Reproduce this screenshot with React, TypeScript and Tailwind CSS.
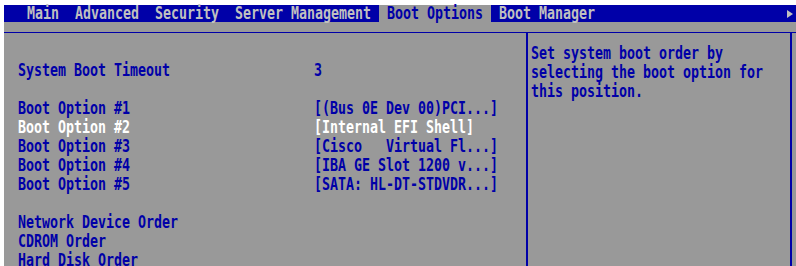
const rows: ({ label: string; value?: string; active?: boolean } | null)[] = [
  { label: 'System Boot Timeout', value: '3' },
  null,
  { label: 'Boot Option #1', value: '[(Bus 0E Dev 00)PCI...]' },
  { label: 'Boot Option #2', value: '[Internal EFI Shell]', active: true },
  { label: 'Boot Option #3', value: '[Cisco   Virtual Fl...]' },
  { label: 'Boot Option #4', value: '[IBA GE Slot 1200 v...]' },
  { label: 'Boot Option #5', value: '[SATA: HL-DT-STDVDR...]' },
  null,
  { label: 'Network Device Order' },
  { label: 'CDROM Order' },
  { label: 'Hard Disk Order' },
]

// bitmap-ish BIOS text: tall mono glyphs squeezed to an 8px cell
function T({ children, className = '' }: { children: React.ReactNode; className?: string }) {
  return (
    <span className={`inline-block origin-left scale-x-[0.782] whitespace-pre ${className}`}>
      {children}
    </span>
  )
}

export default function App() {
  return (
    <div className="flex h-[266px] w-[796px] flex-col overflow-hidden bg-white pl-[4px] pt-[5px] font-['DejaVu_Sans_Mono','Liberation_Mono',monospace] text-[17px] font-bold leading-[19px]">
      {/* tab bar */}
      <div className="flex h-[17px] shrink-0 items-stretch bg-[#0000a8] pl-[15px] leading-[17px] text-[#c0c0c0]">
        <div className="w-[48px] shrink-0 pl-[8px]"><T>Main</T></div>
        <div className="w-[80px] shrink-0 pl-[8px]"><T>Advanced</T></div>
        <div className="w-[80px] shrink-0 pl-[8px]"><T>Security</T></div>
        <div className="w-[152px] shrink-0 pl-[8px]"><T>Server Management</T></div>
        <div className="w-[112px] shrink-0 bg-[#999999] pl-[8px] text-[#0000a8]"><T>Boot Options</T></div>
        <div className="w-[112px] shrink-0 pl-[8px]"><T>Boot Manager</T></div>
        <div className="ml-auto mr-[3px] flex items-center">
          <div className="h-0 w-0 border-y-[4px] border-l-[6px] border-y-transparent border-l-[#c0c0c0]" />
        </div>
      </div>

      <div className="flex flex-1 flex-col bg-[#999999] pt-[10px]">
        <div className="flex flex-1 border-t border-[#0000a8]">
          {/* settings list */}
          <div className="w-[522px] shrink-0 pl-[14px] pt-[28px]">
            {rows.map((r, i) =>
              r ? (
                <div
                  key={i}
                  className={`flex h-[19px] ${r.active ? 'text-white' : 'text-[#0000a8]'}`}
                >
                  <div className="w-[296px] shrink-0"><T>{r.label}</T></div>
                  {r.value && <div className="shrink-0"><T>{r.value}</T></div>}
                </div>
              ) : (
                <div key={i} className="h-[19px]" />
              )
            )}
          </div>

          {/* help panel */}
          <div className="w-[266px] shrink-0 border-x-2 border-[#0000a8] pl-[3px] pt-[11px] text-[#0000a8]">
            <div className="h-[19px]"><T>Set system boot order by</T></div>
            <div className="h-[19px]"><T>selecting the boot option for</T></div>
            <div className="h-[19px]"><T>this position.</T></div>
          </div>
        </div>
      </div>
    </div>
  )
}
